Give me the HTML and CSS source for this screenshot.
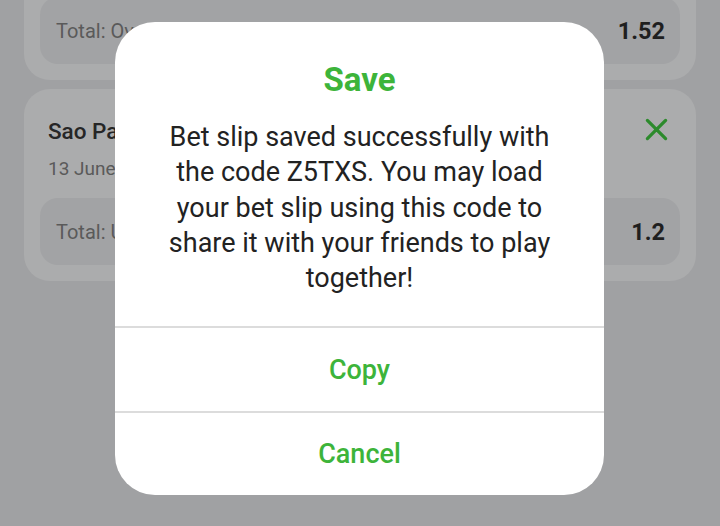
FILE: index.html
```html
<!DOCTYPE html>
<html>
<head>
<meta charset="utf-8">
<link rel="stylesheet" href="styles.css">
</head>
<body>
<div class="screen">
  <div class="list">
    <div class="card">
      <div class="card-head">
        <div class="card-title">Flamengo - Palmeiras</div>
      </div>
      <div class="card-date">12 June 2023, 20:00</div>
      <div class="total">
        <span class="total-label">Total: Over 2.5</span>
        <span class="total-odd">1.52</span>
      </div>
    </div>
    <div class="card">
      <div class="card-head">
        <div class="card-title">Sao Paulo - Santos</div>
        <svg class="close" viewBox="0 0 24 24" width="24" height="24"><path d="M2.5 2.5 L21.5 21.5 M21.5 2.5 L2.5 21.5" stroke="#2c8a2c" stroke-width="3.4" stroke-linecap="round" fill="none"/></svg>
      </div>
      <div class="card-date">13 June 2023, 21:30</div>
      <div class="total">
        <span class="total-label">Total: Under 3.5</span>
        <span class="total-odd">1.2</span>
      </div>
    </div>
  </div>

  <div class="dialog">
    <div class="dialog-title">Save</div>
    <div class="dialog-text">Bet slip saved successfully with the code Z5TXS. You may load your bet slip using this code to share it with your friends to play together!</div>
    <div class="dialog-btn">Copy</div>
    <div class="dialog-btn">Cancel</div>
  </div>
</div>
</body>
</html>
```

FILE: styles.css
```css
* { box-sizing: border-box; }
html, body {
  margin: 0;
  padding: 0;
  width: 720px;
  height: 526px;
  overflow: hidden;
  background: #a0a1a3;
  font-family: Roboto, "Noto Sans", sans-serif;
}
.screen {
  position: relative;
  width: 720px;
  height: 526px;
  overflow: hidden;
}
.list {
  display: flex;
  flex-direction: column;
  gap: 9px;
  padding: 0 24px;
  margin-top: -112px;
}
.card {
  background: #abacad;
  border-radius: 26px;
  padding: 26px 16px 16px 16px;
  height: 192px;
}
.card-head {
  display: flex;
  align-items: center;
  justify-content: space-between;
  padding: 0 12px 0 8px;
  height: 32px;
}
.card-title {
  font-size: 22.5px;
  font-weight: 500;
  color: #262626;
}
.close {
  width: 23px;
  height: 23px;
  margin-top: -4px;
}
.card-date {
  padding-left: 8px;
  margin-top: 11px;
  font-size: 19px;
  color: #5a5a5a;
  height: 22px;
  line-height: 22px;
}
.total {
  margin-top: 18px;
  height: 67px;
  background: #a2a3a5;
  border-radius: 18px;
  display: flex;
  align-items: center;
  justify-content: space-between;
  padding: 0 15px 0 16px;
}
.total-label {
  font-size: 20px;
  color: #5a5a5a;
}
.total-odd {
  font-size: 23.5px;
  font-weight: 700;
  color: #1f1f1f;
}
.dialog {
  position: absolute;
  top: 22px;
  left: 115px;
  width: 489px;
  background: #ffffff;
  border-radius: 40px;
  overflow: hidden;
  display: flex;
  flex-direction: column;
}
.dialog-title {
  padding-top: 40px;
  height: 76px;
  line-height: 36px;
  font-size: 33px;
  font-weight: 700;
  color: #3db43a;
  text-align: center;
}
.dialog-text {
  margin-top: 22px;
  padding: 0 36px 30px 36px;
  font-size: 27px;
  line-height: 35.3px;
  color: #222222;
  text-align: center;
  border-bottom: 2px solid #dcdcdc;
}
.dialog-btn {
  height: 83px;
  display: flex;
  align-items: center;
  justify-content: center;
  font-size: 27px;
  font-weight: 500;
  color: #3db43a;
}
.dialog-btn + .dialog-btn {
  height: 84px;
  border-top: 2px solid #dcdcdc;
}
```
